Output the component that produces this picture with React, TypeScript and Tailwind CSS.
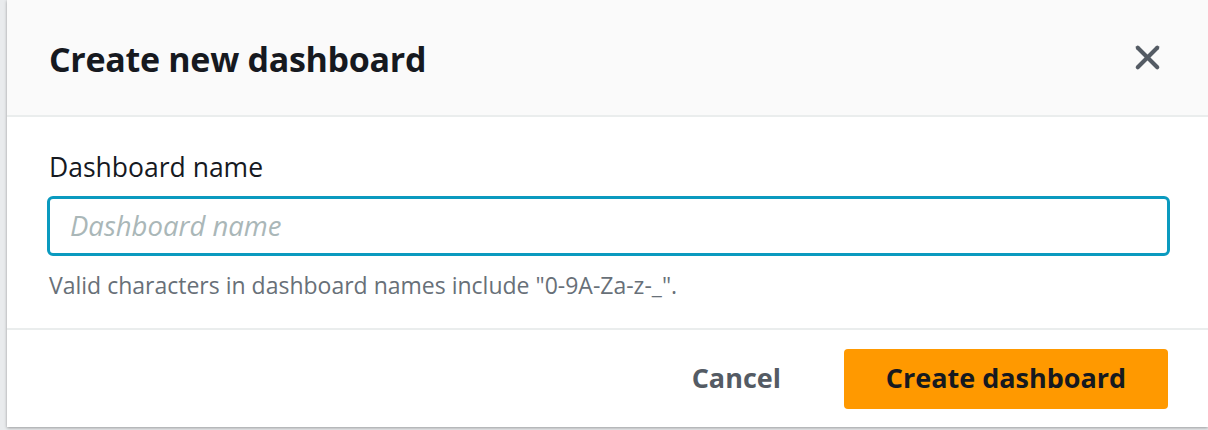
import { X } from 'lucide-react';

export default function App() {
  return (
    <div className="w-[1208px] h-[430px] bg-[#e9ebed] overflow-hidden font-['Open_Sans',sans-serif]">
      <div className="ml-[7px] h-[427px] bg-white flex flex-col shadow-[0_1px_3px_rgba(0,0,0,0.35)]">
        <header className="h-[117px] shrink-0 bg-[#fafafa] border-b-2 border-[#eaeded] flex items-center justify-between pl-[42px] pr-[41px]">
          <h1 className="text-[34px] font-bold text-[#16191f] tracking-[-0.3px] leading-none pt-[2px]">Create new dashboard</h1>
          <button className="text-[#545b64]">
            <X size={39} strokeWidth={2.5} />
          </button>
        </header>

        <section className="flex-1 border-b-2 border-[#eaeded] pl-[40px] pr-[38px] pt-[37px]">
          <label className="block pl-[2px] text-[26.5px] text-[#16191f] leading-none">Dashboard name</label>
          <div className="mt-[15px] h-[60px] rounded-[6px] border-[3px] border-[#0a9abf] flex items-center px-[20px]">
            <span className="text-[27.5px] italic text-[#aab7b8]">Dashboard name</span>
          </div>
          <p className="mt-[12px] pl-[2px] text-[23px] text-[#687078]">
            Valid characters in dashboard names include "0-9A-Za-z-_".
          </p>
        </section>

        <footer className="h-[97px] shrink-0 flex items-center justify-end gap-[63px] pr-[40px]">
          <button className="text-[27px] font-bold text-[#545b64]">Cancel</button>
          <button className="w-[324px] h-[60px] rounded-[4px] bg-[#ff9900] text-[27px] font-bold text-[#16191f]">
            Create dashboard
          </button>
        </footer>
      </div>
    </div>
  );
}
